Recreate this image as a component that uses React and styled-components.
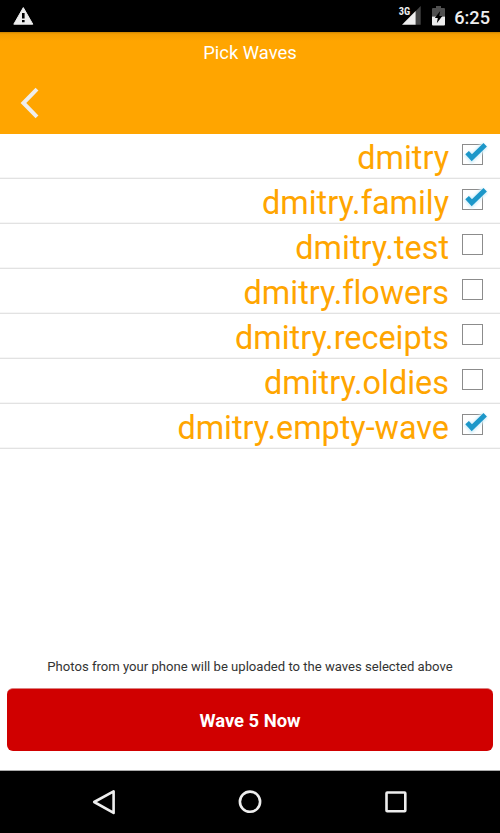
import { useState } from 'react'
import styled, { createGlobalStyle } from 'styled-components'

const initialWaves = [
  { name: 'dmitry', checked: true },
  { name: 'dmitry.family', checked: true },
  { name: 'dmitry.test', checked: false },
  { name: 'dmitry.flowers', checked: false },
  { name: 'dmitry.receipts', checked: false },
  { name: 'dmitry.oldies', checked: false },
  { name: 'dmitry.empty-wave', checked: true },
]

const StatusBar = () => (
  <StatusBarStyled>
    <svg width="22" height="20" viewBox="0 0 22 20">
      <path d="M11.3 1.6L20.8 18.2H1.8z" fill="#eee" stroke="#eee" strokeLinejoin="round" />
      <path d="M10 7h2.6v5.6H10zM10 14h2.6v2.3H10z" fill="#000" />
    </svg>
    <StatusIcons>
      <Network>3G</Network>
      <svg width="19" height="19" viewBox="0 0 19 19">
        <path d="M18.7 0v18.7H13.3V5.4z" fill="#444" />
        <path d="M13.6 5.1v13.6H0z" fill="#eee" />
      </svg>
      <Battery width="13" height="20" viewBox="0 0 13 20">
        <path d="M4 0h5v2h3q1 0 1 1v7.5H0V3q0-1 1-1h3z" fill="#505050" />
        <path d="M0 10.5h13V18.5q0 1-1 1H1q-1 0-1-1z" fill="#eee" />
        <path d="M8.2 5L2.8 12h3L4.8 17.2 10.3 10H7.2z" fill="#000" />
      </Battery>
      <Clock>6:25</Clock>
    </StatusIcons>
  </StatusBarStyled>
)

const CheckBox = ({ checked }) => (
  <svg width="28" height="28" viewBox="0 0 28 28">
    <rect x="2.5" y="4.5" width="20" height="20" fill="#fff" stroke="#8c8c8c" />
    {checked && (
      <>
        <Glow d="M7 12.8L11.8 18.2L25 5" fill="none" stroke="#d8f1fb" strokeWidth="8" />
        <path d="M7.1 12.6L11.8 17.7L25.2 4.8" fill="none" stroke="#1c97c9" strokeWidth="4.9" />
      </>
    )}
  </svg>
)

const App = () => {
  const [waves, setWaves] = useState(initialWaves)

  const toggle = (name) => {
    setWaves(waves.map((w) => (w.name === name ? { ...w, checked: !w.checked } : w)))
  }

  return (
    <>
      <GlobalStyle />
      <Screen>
        <StatusBar />
        <Header>
          <Title>Pick Waves</Title>
          <BackButton aria-label="Back">
            <svg width="20" height="32" viewBox="0 0 20 32">
              <path d="M17 2.2L3.4 16L17 29.8" fill="none" stroke="#eee" strokeWidth="4" />
            </svg>
          </BackButton>
        </Header>
        <List>
          {waves.map((wave) => (
            <Row key={wave.name} onClick={() => toggle(wave.name)}>
              <WaveName>{wave.name}</WaveName>
              <CheckBox checked={wave.checked} />
            </Row>
          ))}
        </List>
        <Hint>Photos from your phone will be uploaded to the waves selected above</Hint>
        <WaveButton>Wave 5 Now</WaveButton>
        <NavBar>
          <svg width="26" height="28" viewBox="0 0 26 28">
            <path d="M22.6 3.3v21.6L3.2 14z" fill="none" stroke="#eee" strokeWidth="2.6" strokeLinejoin="round" />
          </svg>
          <svg width="26" height="28" viewBox="0 0 26 28">
            <circle cx="13" cy="13.7" r="10.1" fill="none" stroke="#eee" strokeWidth="2.6" />
          </svg>
          <svg width="26" height="28" viewBox="0 0 26 28">
            <rect x="3.5" y="4.5" width="18.8" height="18.8" rx="0.7" fill="none" stroke="#eee" strokeWidth="2.6" />
          </svg>
        </NavBar>
      </Screen>
    </>
  )
}

export default App

const GlobalStyle = createGlobalStyle`
  * {
    box-sizing: border-box;
  }
  body {
    margin: 0;
    font-family: Roboto, sans-serif;
    font-variant-ligatures: none;
  }
  svg {
    display: block;
    flex: none;
  }
`

const Screen = styled.div`
  display: flex;
  flex-direction: column;
  width: 500px;
  height: 833px;
  background: #fff;
  overflow: hidden;
`

const StatusBarStyled = styled.div`
  display: flex;
  justify-content: space-between;
  height: 32px;
  padding: 6px 10px 0 12px;
  background: #000;
`

const StatusIcons = styled.div`
  display: flex;
  color: #eee;
`

const Network = styled.span`
  margin-right: -8px;
  font-family: 'Roboto Condensed', Roboto, sans-serif;
  font-size: 10.5px;
  font-weight: 700;
  line-height: 12px;
`

const Battery = styled.svg`
  margin-left: 11px;
`

const Clock = styled.span`
  margin-left: 9px;
  font-size: 18.2px;
  font-weight: 500;
  line-height: 23px;
`

const Header = styled.div`
  height: 102px;
  background: linear-gradient(#c98200 0, #f59e00 2px, #ffa500 9px);
`

const Title = styled.div`
  padding-top: 10px;
  color: #fff;
  font-size: 18.4px;
  line-height: 22px;
  text-align: center;
`

const BackButton = styled.button`
  display: block;
  margin: 23px 0 0 20px;
  padding: 0;
  border: 0;
  background: none;
`

const List = styled.div`
  flex: 1;
`

const Row = styled.div`
  display: flex;
  justify-content: flex-end;
  height: 45px;
  padding: 6px 12px 0 0;
  border-bottom: 1px solid #e2e2e2;
  box-shadow: inset 0 -1px #f6f6f6;
`

const WaveName = styled.span`
  margin-right: 11px;
  color: #ffa500;
  font-size: 32.4px;
  line-height: 36px;
`

const Glow = styled.path`
  filter: blur(1px);
`

const Hint = styled.div`
  color: #333;
  font-size: 13.1px;
  line-height: 16px;
  text-align: center;
`

const WaveButton = styled.button`
  height: 63px;
  margin: 13px 7px 19px;
  border: 0;
  border-top: 1px solid #dc8080;
  border-radius: 6px;
  background: #d00000;
  color: #fff;
  font-family: inherit;
  font-size: 18.4px;
  font-weight: 700;
`

const NavBar = styled.div`
  display: flex;
  justify-content: space-between;
  height: 63px;
  padding: 17px 91px 0;
  border-top: 1px solid #aaa;
  background: #000;
`
